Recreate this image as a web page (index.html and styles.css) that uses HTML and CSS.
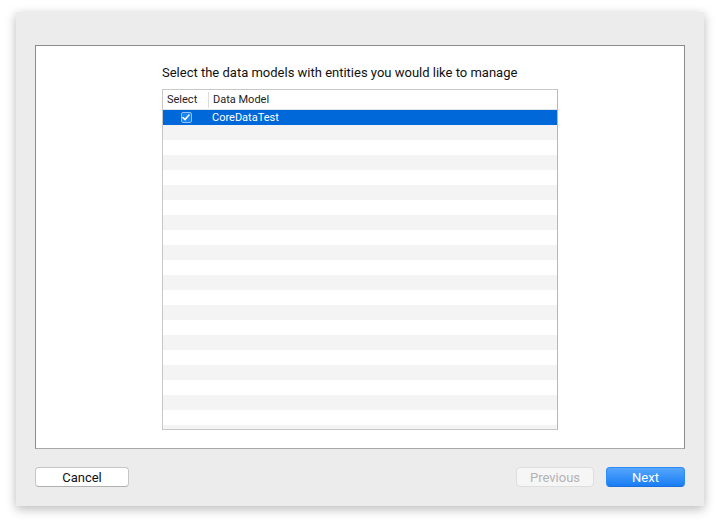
FILE: index.html
```html
<!DOCTYPE html>
<html>
<head>
    <meta charset="UTF-8">
    <title>Select Data Models</title>
    <link rel="stylesheet" href="styles.css">
</head>
<body>
    <!-- dialog window -->
    <div class="window">
        <div class="panel">
            <div class="content">
                <p class="prompt">Select the data models with entities you would like to manage</p>

                <div class="table">
                    <div class="table_head">
                        <span class="col_select">Select</span>
                        <span class="col_model">Data Model</span>
                    </div>
                    <div class="table_body">
                        <div class="row selected">
                            <span class="col_select"><span class="check">
                                <svg width="8" height="7" viewBox="0 0 8 7"><path d="M1 3.6 L3.1 5.6 L7 1" fill="none" stroke="#fff" stroke-width="1.6" stroke-linecap="round" stroke-linejoin="round"/></svg>
                            </span></span>
                            <span class="col_model">CoreDataTest</span>
                        </div>
                    </div>
                </div>
            </div>
        </div>

        <div class="footer">
            <button class="btn">Cancel</button>
            <div class="nav_btns">
                <button class="btn disabled">Previous</button>
                <button class="btn primary">Next</button>
            </div>
        </div>
    </div>
</body>
</html>
```

FILE: styles.css
```css
*{margin:0;padding:0;box-sizing:border-box;}
html,body{width:100%;height:100%;background:#fff;}
body{padding:12px 16px;font-family:Roboto,"Liberation Sans",sans-serif;color:#1a1a1a;}

/* window */
.window{
    width:688px;height:494px;
    background:#ececec;
    box-shadow:0 3px 10px rgba(0,0,0,0.28);
    padding:33px 19px 0 19px;
}

/* white panel with the table */
.panel{
    height:404px;
    background:#fff;
    border:1px solid #8c8c8c;
    border-bottom-color:#a8a8a8;
    display:flex;flex-direction:column;align-items:center;
    padding-top:19px;
}
.content{display:flex;flex-direction:column;align-items:flex-start;}
.prompt{font-size:13px;line-height:16px;color:#111;}

.table{
    width:396px;height:341px;margin-top:8px;
    border:1px solid #c8c8c8;border-right-color:#b8b8b8;
    display:flex;flex-direction:column;
}
.table_head{height:20px;display:flex;align-items:center;font-size:11px;color:#222;border-bottom:1px solid #e4e4e4;}
.table_head .col_select{padding-left:4px;}
.table_head .col_model{border-left:1px solid #dcdcdc;padding-left:4px;height:16px;line-height:16px;}
.col_select{width:45px;flex:none;}
.col_model{flex:1;}

.table_body{
    flex:1;
    background:repeating-linear-gradient(#fff 0 15px,#f4f4f4 15px 30px);
}
.row{height:15px;display:flex;align-items:center;font-size:11px;}
.row.selected{background:#0068d9;color:#fff;}
.row .col_model{padding-left:4px;}
.row .col_select{display:flex;justify-content:center;}
.check{
    width:11px;height:11px;border-radius:2px;
    background:#1b82f2;border:1px solid #8fc1f8;
    display:flex;align-items:center;justify-content:center;
    margin-left:1px;
}

/* bottom buttons */
.footer{display:flex;justify-content:space-between;align-items:center;margin-top:18px;}
.nav_btns{display:flex;gap:12px;}
.btn{
    height:20px;font-family:Roboto,"Liberation Sans",sans-serif;font-size:13px;
    background:#fff;border:1px solid #c6c6c6;border-bottom-color:#b0b0b0;border-radius:4px;
    color:#111;width:94px;
}
.btn.disabled{width:78px;background:#f6f6f6;border-color:#dedede;color:#b3b3b3;}
.btn.primary{width:79px;background:linear-gradient(#55a6fc,#1a7df5);border-color:#2f8af5;border-bottom-color:#1b6fd8;color:#fff;}
```
